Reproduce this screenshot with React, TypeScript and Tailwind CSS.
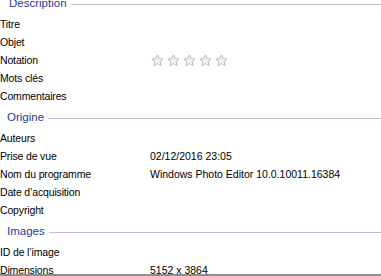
import React from "react";

type Row = { label: string; value?: React.ReactNode };

const Star = () => (
  <svg width="13" height="13" viewBox="0 0 24 24" className="shrink-0">
    <path
      d="M12 1.8l2.9 6.9 7.4.6-5.6 4.9 1.7 7.3L12 17.6l-6.4 3.9 1.7-7.3L1.7 9.3l7.4-.6z"
      fill="#f6f6f6"
      stroke="#b8b8b8"
      strokeWidth="1.8"
      strokeLinejoin="round"
    />
  </svg>
);

const Stars = () => (
  <div className="flex items-center gap-[3px] pl-[1px]">
    <Star />
    <Star />
    <Star />
    <Star />
    <Star />
  </div>
);

const sections: { title: string; indent: string; rows: Row[] }[] = [
  {
    title: "Description",
    indent: "pl-[9px]",
    rows: [
      { label: "Titre" },
      { label: "Objet" },
      { label: "Notation", value: <Stars /> },
      { label: "Mots clés" },
      { label: "Commentaires" },
    ],
  },
  {
    title: "Origine",
    indent: "pl-[7px]",
    rows: [
      { label: "Auteurs" },
      { label: "Prise de vue", value: "02/12/2016 23:05" },
      { label: "Nom du programme", value: "Windows Photo Editor 10.0.10011.16384" },
      { label: "Date d’acquisition" },
      { label: "Copyright" },
    ],
  },
  {
    title: "Images",
    indent: "pl-[7px]",
    rows: [
      { label: "ID de l’image" },
      { label: "Dimensions", value: "5152 x 3864" },
    ],
  },
];

export default function App() {
  return (
    <div
      className="w-[381px] h-[276px] overflow-hidden bg-white border-b-2 border-[#8e8e8e]"
      style={{ fontFamily: '"Liberation Sans", Arial, sans-serif' }}
    >
      <div className="-mt-[7px] flex flex-col">
        {sections.map((s, i) => (
          <section key={s.title} className={i === 0 ? "" : "mt-[2px]"}>
            <div className={`flex h-[22px] items-center ${s.indent}`}>
              <span className="text-[11.5px] leading-none text-[#1f3b9f]">{s.title}</span>
              <div className="ml-[4px] h-px flex-1 bg-[#b9c3dc]" />
            </div>
            {s.rows.map((r) => (
              <div key={r.label} className="flex h-[18px] items-center text-black">
                <div className="w-[150px] shrink-0 text-[10.5px] tracking-[-0.15px] leading-none whitespace-nowrap">
                  {r.label}
                </div>
                <div className="text-[10.5px] leading-none whitespace-nowrap">{r.value}</div>
              </div>
            ))}
          </section>
        ))}
      </div>
    </div>
  );
}
